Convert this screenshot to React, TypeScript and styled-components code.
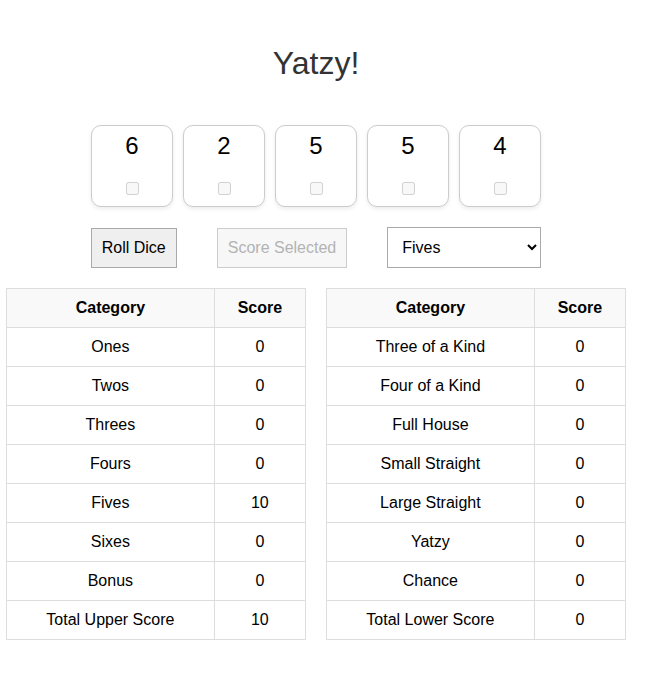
import React from "react";
import styled, { createGlobalStyle } from "styled-components";

const GlobalStyle = createGlobalStyle`
  html, body { margin: 0; padding: 0; background: #ffffff; }
  body { font-family: "Liberation Sans", Arial, sans-serif; color: #000; }
`;

const Page = styled.div`
  width: 620px;
  margin-left: 6px;
  padding-top: 45px;
  display: flex;
  flex-direction: column;
  align-items: center;
`;

const Title = styled.h1`
  margin: 0;
  font-size: 32px;
  line-height: 37px;
  font-weight: normal;
  color: #333;
  text-align: center;
`;

const DiceRow = styled.div`
  margin-top: 43px;
  display: flex;
  justify-content: center;
  gap: 10px;
`;

const Die = styled.div`
  width: 82px;
  height: 82px;
  box-sizing: border-box;
  border: 1px solid #ccc;
  border-radius: 10px;
  box-shadow: 0 2px 4px rgba(0, 0, 0, 0.08);
  display: flex;
  flex-direction: column;
  align-items: center;
  padding-top: 6px;
  background: #fff;
`;

const DieValue = styled.span`
  font-size: 24px;
  line-height: 28px;
  height: 28px;
`;

const DieCheck = styled.input`
  margin: 22px 0 0 0;
  width: 13px;
  height: 13px;
`;

const Controls = styled.div`
  margin-top: 20px;
  display: flex;
  justify-content: center;
  align-items: center;
  gap: 40px;
`;

const Button = styled.button`
  font-family: "Liberation Sans", Arial, sans-serif;
  font-size: 16px;
  line-height: 18px;
  padding: 10px;
  height: 40px;
  border: 1px solid #aaa;
  border-radius: 0;
  background: #efefef;
  color: #000;
  box-sizing: border-box;
  &:disabled {
    background: #f7f7f7;
    color: #b3b3b3;
    border-color: #ccc;
  }
`;

const Select = styled.select`
  font-family: "Liberation Sans", Arial, sans-serif;
  font-size: 16px;
  width: 154px;
  height: 41px;
  padding: 0 10px;
  border: 1px solid #aaa;
  border-radius: 0;
  background: #fff;
  color: #000;
  box-sizing: border-box;
`;

const Tables = styled.div`
  margin-top: 20px;
  display: flex;
  gap: 20px;
  align-self: stretch;
`;

const Table = styled.table`
  width: 300px;
  border-collapse: collapse;
  font-size: 16px;
`;

const Th = styled.th`
  border: 1px solid #ddd;
  background: #f9f9f9;
  padding: 10px;
  line-height: 18px;
  font-weight: bold;
  text-align: center;
`;

const Td = styled.td`
  border: 1px solid #ddd;
  padding: 10px;
  line-height: 18px;
  text-align: center;
`;

const dice = [6, 2, 5, 5, 4];

const upper: [string, number][] = [
  ["Ones", 0],
  ["Twos", 0],
  ["Threes", 0],
  ["Fours", 0],
  ["Fives", 10],
  ["Sixes", 0],
  ["Bonus", 0],
  ["Total Upper Score", 10],
];

const lower: [string, number][] = [
  ["Three of a Kind", 0],
  ["Four of a Kind", 0],
  ["Full House", 0],
  ["Small Straight", 0],
  ["Large Straight", 0],
  ["Yatzy", 0],
  ["Chance", 0],
  ["Total Lower Score", 0],
];

const options = [
  "Ones",
  "Twos",
  "Threes",
  "Fours",
  "Fives",
  "Sixes",
  "Three of a Kind",
  "Four of a Kind",
  "Full House",
  "Small Straight",
  "Large Straight",
  "Yatzy",
  "Chance",
];

function ScoreTable({ rows }: { rows: [string, number][] }) {
  return (
    <Table>
      <thead>
        <tr>
          <Th>Category</Th>
          <Th>Score</Th>
        </tr>
      </thead>
      <tbody>
        {rows.map(([name, score]) => (
          <tr key={name}>
            <Td>{name}</Td>
            <Td>{score}</Td>
          </tr>
        ))}
      </tbody>
    </Table>
  );
}

export default function App() {
  return (
    <>
      <GlobalStyle />
      <Page>
        <Title>Yatzy!</Title>
        <DiceRow>
          {dice.map((d, i) => (
            <Die key={i}>
              <DieValue>{d}</DieValue>
              <DieCheck type="checkbox" disabled />
            </Die>
          ))}
        </DiceRow>
        <Controls>
          <Button>Roll Dice</Button>
          <Button disabled>Score Selected</Button>
          <Select defaultValue="Fives">
            {options.map((o) => (
              <option key={o} value={o}>
                {o}
              </option>
            ))}
          </Select>
        </Controls>
        <Tables>
          <ScoreTable rows={upper} />
          <ScoreTable rows={lower} />
        </Tables>
      </Page>
    </>
  );
}
